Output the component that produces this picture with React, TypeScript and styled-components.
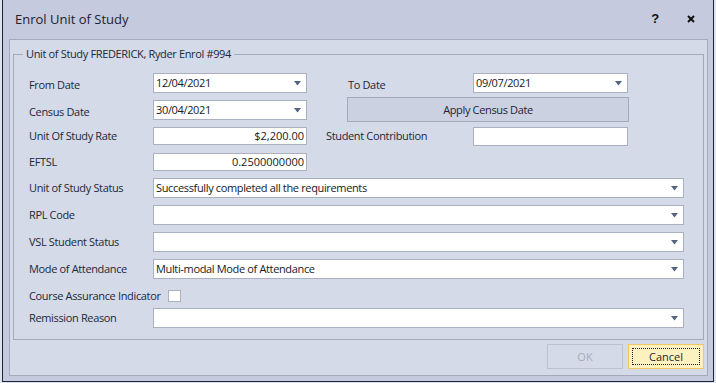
import styled, { createGlobalStyle } from "styled-components";

const GlobalStyle = createGlobalStyle`
  html, body {
    margin: 0;
    padding: 0;
    background: #dfe3ec;
  }
  body {
    font-family: "Open Sans", "Noto Sans", sans-serif;
    font-size: 11px;
    letter-spacing: -0.35px;
    color: #20293a;
  }
`;

const Window = styled.div`
  margin-left: 2px;
  width: 710px;
  height: 381px;
  background: #c5cadf;
  border-left: 1px solid #1b2638;
  border-right: 1px solid #1b2638;
  border-bottom: 1px solid #1b2638;
  display: flex;
  flex-direction: column;
`;

const TitleBar = styled.div`
  height: 39px;
  display: flex;
  align-items: center;
  padding: 0 4px 0 12px;
  flex-shrink: 0;
`;

const Title = styled.div`
  flex: 1;
  font-size: 13px;
  letter-spacing: 0;
  color: #1d2230;
  padding-bottom: 2px;
`;

const TitleButton = styled.div`
  width: 36px;
  height: 20px;
  display: flex;
  align-items: center;
  justify-content: center;
  font-family: "Liberation Sans", sans-serif;
  font-weight: bold;
  font-size: 13px;
  color: #111;
  padding-bottom: 2px;
`;

const CloseIcon = styled.svg`
  width: 8px;
  height: 8px;
`;

const Panel = styled.div`
  margin: 0 5px 5px 6px;
  flex: 1;
  background: #d5dae8;
  border: 1px solid #a3aaba;
  display: flex;
  flex-direction: column;
  padding: 0 3px 6px 3px;
`;

const GroupBox = styled.div`
  position: relative;
  box-sizing: border-box;
  margin-top: 14px;
  height: 286px;
  border: 1px solid #a3aaba;
  padding: 18px 0 0 15px;
`;

const Caption = styled.div`
  position: absolute;
  top: -9px;
  left: 9px;
  padding: 0 3px;
  background: #d5dae8;
  line-height: 16px;
  color: #20293a;
`;

const Row = styled.div<{ $h: number }>`
  height: ${(p) => p.$h}px;
  display: flex;
  align-items: flex-start;
`;

const Label = styled.div<{ $w: number; $ml?: number; $h?: number; $dy?: number }>`
  width: ${(p) => p.$w}px;
  margin-left: ${(p) => p.$ml ?? 0}px;
  padding-top: ${(p) => p.$dy ?? 0}px;
  height: ${(p) => p.$h ?? 20}px;
  line-height: ${(p) => p.$h ?? 20}px;
  flex-shrink: 0;
  white-space: nowrap;
`;

const Field = styled.div<{ $w: number; $h?: number; $right?: boolean }>`
  width: ${(p) => p.$w}px;
  height: ${(p) => p.$h ?? 20}px;
  box-sizing: border-box;
  background: #fff;
  border: 1px solid #aab0bf;
  display: flex;
  align-items: center;
  padding: 0 2px 0 2px;
  justify-content: ${(p) => (p.$right ? "flex-end" : "flex-start")};
  color: #151a24;
  flex-shrink: 0;
  white-space: nowrap;
`;

const FieldText = styled.span`
  flex: 1;
  line-height: 16px;
`;

const RightText = styled.span`
  line-height: 16px;
  letter-spacing: 0;
`;

const Arrow = styled.svg`
  width: 7px;
  height: 5px;
  margin-right: 3px;
  flex-shrink: 0;
`;

const ApplyButton = styled.div`
  margin-left: 40px;
  margin-top: -3px;
  width: 282px;
  height: 25px;
  box-sizing: border-box;
  background: #ccd1e1;
  border: 1px solid #a4aab9;
  display: flex;
  align-items: center;
  justify-content: center;
  color: #1d2433;
`;

const CheckBox = styled.div`
  width: 13px;
  height: 12px;
  box-sizing: border-box;
  border: 1px solid #a9b0bf;
  background: #fff;
  margin-top: 4px;
`;

const ButtonBar = styled.div`
  display: flex;
  justify-content: flex-end;
  gap: 5px;
  margin-top: 4px;
`;

const DialogButton = styled.div<{ $primary?: boolean; $disabled?: boolean }>`
  width: 76px;
  height: 25px;
  box-sizing: border-box;
  border: 1px solid ${(p) => (p.$primary ? "#f0c760" : "#bcc2d0")};
  background: ${(p) => (p.$primary ? "#fef1c0" : "transparent")};
  color: ${(p) => (p.$disabled ? "#a7adbb" : "#1d2433")};
  display: flex;
  align-items: center;
  justify-content: center;
  padding: 3px;
  letter-spacing: 0;
`;

const FocusRect = styled.div`
  flex: 1;
  align-self: stretch;
  border: 1px dotted #222;
  display: flex;
  align-items: center;
  justify-content: center;
`;

const DropArrow = () => (
  <Arrow viewBox="0 0 7 5">
    <polygon points="0,0 7,0 3.5,4.5" fill="#56657f" />
  </Arrow>
);

const Combo = ({ w, value }: { w: number; value?: string }) => (
  <Field $w={w}>
    <FieldText>{value}</FieldText>
    <DropArrow />
  </Field>
);

export default function App() {
  return (
    <>
      <GlobalStyle />
      <Window>
        <TitleBar>
          <Title>Enrol Unit of Study</Title>
          <TitleButton>?</TitleButton>
          <TitleButton>
            <CloseIcon viewBox="0 0 8 8">
              <path d="M1 1 L7 7 M7 1 L1 7" stroke="#111" strokeWidth="2" />
            </CloseIcon>
          </TitleButton>
        </TitleBar>
        <Panel>
          <GroupBox>
            <Caption>Unit of Study FREDERICK, Ryder Enrol #994</Caption>
            <Row $h={27}>
              <Label $w={124} $dy={2}>From Date</Label>
              <Combo w={154} value="12/04/2021" />
              <Label $w={125} $ml={41} $dy={2}>To Date</Label>
              <Combo w={155} value="09/07/2021" />
            </Row>
            <Row $h={27}>
              <Label $w={124} $dy={2}>Census Date</Label>
              <Combo w={154} value="30/04/2021" />
              <ApplyButton>Apply Census Date</ApplyButton>
            </Row>
            <Row $h={26}>
              <Label $w={124} $h={18}>Unit Of Study Rate</Label>
              <Field $w={154} $h={18} $right>
                <RightText>$2,200.00</RightText>
              </Field>
              <Label $w={147} $ml={19} $h={18}>Student Contribution</Label>
              <Field $w={155} $h={19} />
            </Row>
            <Row $h={25}>
              <Label $w={124} $h={18}>EFTSL</Label>
              <Field $w={154} $h={18} $right>
                <RightText>0.2500000000</RightText>
              </Field>
            </Row>
            <Row $h={27}>
              <Label $w={124}>Unit of Study Status</Label>
              <Combo w={531} value="Successfully completed all the requirements" />
            </Row>
            <Row $h={27}>
              <Label $w={124}>RPL Code</Label>
              <Combo w={531} />
            </Row>
            <Row $h={27}>
              <Label $w={124}>VSL Student Status</Label>
              <Combo w={531} />
            </Row>
            <Row $h={27}>
              <Label $w={124}>Mode of Attendance</Label>
              <Combo w={531} value="Multi-modal Mode of Attendance" />
            </Row>
            <Row $h={22}>
              <Label $w={139}>Course Assurance Indicator</Label>
              <CheckBox />
            </Row>
            <Row $h={22}>
              <Label $w={124}>Remission Reason</Label>
              <Combo w={531} />
            </Row>
          </GroupBox>
          <ButtonBar>
            <DialogButton $disabled>OK</DialogButton>
            <DialogButton $primary>
              <FocusRect>Cancel</FocusRect>
            </DialogButton>
          </ButtonBar>
        </Panel>
      </Window>
    </>
  );
}
